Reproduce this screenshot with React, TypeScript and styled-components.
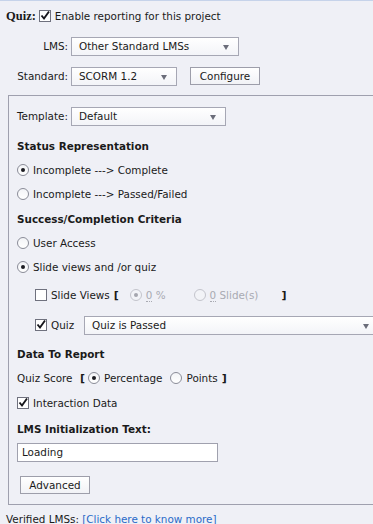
import React from 'react';
import styled, { createGlobalStyle } from 'styled-components';

const GlobalStyle = createGlobalStyle`
  html, body {
    margin: 0;
    padding: 0;
    background: #eff0f6;
    overflow: hidden;
  }
  body {
    font-family: Tahoma, 'DejaVu Sans', sans-serif;
    font-size: 10.4px;
    color: #1a1a1a;
  }
`;

const Page = styled.div`
  border-top: 1px solid #c6d3ea;
  width: 373px;
  height: 523px;
  overflow: hidden;
`;

const Header = styled.div`
  padding-left: 6px;
`;

const Row = styled.div<{ $h?: number; $mt?: number; $indent?: number }>`
  display: flex;
  align-items: center;
  height: ${(p) => p.$h ?? 24}px;
  margin-top: ${(p) => p.$mt ?? 0}px;
  padding-left: ${(p) => p.$indent ?? 0}px;
  white-space: nowrap;
`;

const Label = styled.span<{ $w?: number; $right?: boolean }>`
  display: inline-block;
  width: ${(p) => (p.$w ? `${p.$w}px` : 'auto')};
  text-align: ${(p) => (p.$right ? 'right' : 'left')};
  margin-right: 3px;
`;

const QuizTitle = styled.span`
  font-family: 'Liberation Serif', serif;
  font-weight: bold;
  font-size: 12.5px;
  margin-right: 3px;
`;

const Heading = styled.div<{ $mt?: number }>`
  height: 24px;
  line-height: 24px;
  margin-top: ${(p) => p.$mt ?? 0}px;
  font-weight: bold;
`;

const Select = styled.div<{ $w: number }>`
  position: relative;
  box-sizing: border-box;
  width: ${(p) => p.$w}px;
  min-width: ${(p) => p.$w}px;
  height: 19px;
  line-height: 17px;
  padding-left: 7px;
  border: 1px solid #a6a7b4;
  background: linear-gradient(#ffffff, #f3f4f8);
  &::after {
    content: '';
    position: absolute;
    right: 9px;
    top: 7px;
    border-left: 3px solid transparent;
    border-right: 3px solid transparent;
    border-top: 5px solid #6b6d7a;
  }
`;

const Button = styled.div<{ $w: number; $ml?: number }>`
  box-sizing: border-box;
  width: ${(p) => p.$w}px;
  height: 18px;
  line-height: 16px;
  margin-left: ${(p) => p.$ml ?? 0}px;
  text-align: center;
  border: 1px solid #9d9eaa;
  background: linear-gradient(#ffffff, #f1f2f6);
`;

const Box = styled.span`
  position: relative;
  box-sizing: border-box;
  display: inline-block;
  width: 12px;
  height: 12px;
  margin-right: 4px;
  border: 1px solid #6f717e;
  background: #fff;
  flex-shrink: 0;
`;

const Radio = styled.span<{ $on?: boolean; $off?: boolean }>`
  position: relative;
  box-sizing: border-box;
  display: inline-block;
  width: 12px;
  height: 12px;
  margin-right: 4px;
  border-radius: 50%;
  border: 1px solid ${(p) => (p.$off ? '#c3c4cc' : '#8a8c98')};
  background: ${(p) => (p.$off ? '#f2f3f7' : 'linear-gradient(#f3f4f7, #ffffff)')};
  flex-shrink: 0;
  &::after {
    content: '';
    display: ${(p) => (p.$on ? 'block' : 'none')};
    position: absolute;
    left: 3px;
    top: 3px;
    width: 4px;
    height: 4px;
    border-radius: 50%;
    background: ${(p) => (p.$off ? '#a5a6ae' : '#1c1c22')};
  }
`;

const Dim = styled.span`
  color: #a9aab2;
`;

const Dotted = styled.span`
  border-bottom: 1px dotted #a9aab2;
`;

const Bracket = styled.span<{ $ml?: number; $mr?: number }>`
  font-weight: bold;
  font-size: 11px;
  margin-left: ${(p) => p.$ml ?? 0}px;
  margin-right: ${(p) => p.$mr ?? 0}px;
`;

const Panel = styled.div`
  margin: 4px -20px 0 8px;
  border: 1px solid #9fa0ae;
  padding: 8px 8px 10px 8px;
`;

const Input = styled.div`
  box-sizing: border-box;
  width: 201px;
  height: 19px;
  line-height: 17px;
  margin-top: 2px;
  padding-left: 4px;
  border: 1px solid #a0a1ae;
  background: #fff;
`;

const Footer = styled.div`
  margin-top: 8px;
  padding-left: 6px;
  white-space: nowrap;
`;

const Link = styled.span`
  color: #2a6ac8;
`;

const Check = ({ checked }: { checked?: boolean }) => (
  <Box>
    {checked && (
      <svg width="12" height="12" viewBox="0 0 12 12" style={{ position: 'absolute', left: -1, top: -1 }}>
        <path d="M2.5 5.5 L5 8.5 L10 1.5" fill="none" stroke="#16161c" strokeWidth="1.9" />
      </svg>
    )}
  </Box>
);

export default function App() {
  return (
    <Page>
      <GlobalStyle />
      <Header>
        <Row $h={30}>
          <QuizTitle>Quiz:</QuizTitle>
          <Check checked />
          <span>Enable reporting for this project</span>
        </Row>
        <Row $h={30}>
          <Label $w={62} $right>LMS:</Label>
          <Select $w={168}>Other Standard LMSs</Select>
        </Row>
        <Row $h={30}>
          <Label $w={62} $right>Standard:</Label>
          <Select $w={106}>SCORM 1.2</Select>
          <Button $w={70} $ml={13}>Configure</Button>
        </Row>
      </Header>
      <Panel>
        <Row>
          <Label $w={51}>Template:</Label>
          <Select $w={155}>Default</Select>
        </Row>
        <Heading $mt={6}>Status Representation</Heading>
        <Row>
          <Radio $on />
          Incomplete ---&gt; Complete
        </Row>
        <Row>
          <Radio />
          Incomplete ---&gt; Passed/Failed
        </Row>
        <Heading $mt={1}>Success/Completion Criteria</Heading>
        <Row>
          <Radio />
          User Access
        </Row>
        <Row>
          <Radio $on />
          Slide views and /or quiz
        </Row>
        <Row $h={30} $mt={1} $indent={18}>
          <Check />
          Slide Views<Bracket $ml={4} $mr={11}>[</Bracket>
          <Radio $on $off />
          <Dim>
            <Dotted>0</Dotted> %
          </Dim>
          <Bracket $mr={28} />
          <Radio $off />
          <Dim>
            <Dotted>0</Dotted> Slide(s)
          </Dim>
          <Bracket $ml={23}>]</Bracket>
        </Row>
        <Row $h={30} $indent={18}>
          <Check checked />
          <Label $w={30}>Quiz</Label>
          <Select $w={295}>Quiz is Passed</Select>
        </Row>
        <Heading $mt={2}>Data To Report</Heading>
        <Row>
          <Label $w={60}>Quiz Score</Label>
          <Bracket $mr={3}>[</Bracket>
          <Radio $on />
          Percentage
          <Bracket $mr={8} />
          <Radio />
          Points
          <Bracket $ml={4}>]</Bracket>
        </Row>
        <Row $mt={1}>
          <Check checked />
          Interaction Data
        </Row>
        <Heading $mt={2}>LMS Initialization Text:</Heading>
        <Input>Loading</Input>
        <Row $h={18} $mt={14} $indent={3}>
          <Button $w={70}>Advanced</Button>
        </Row>
      </Panel>
      <Footer>
        Verified LMSs: <Link>[Click here to know more]</Link>
      </Footer>
    </Page>
  );
}
